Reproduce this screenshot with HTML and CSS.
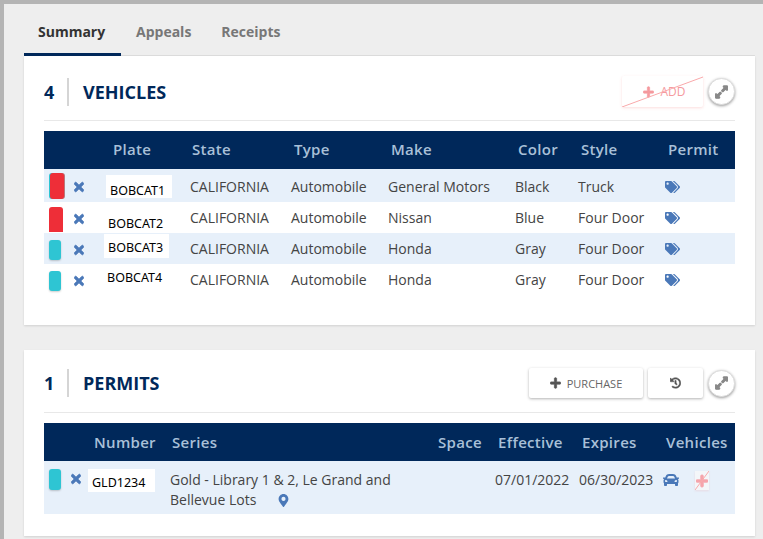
FILE: index.html
```html
<!DOCTYPE html>
<html lang="en">
<head>
    <meta charset="UTF-8">
    <title>Summary</title>
    <link rel="stylesheet" href="styles.css">
</head>
<body>
    <svg class="icon-defs" xmlns="http://www.w3.org/2000/svg">
        <symbol id="i-tags" viewBox="0 0 640 512"><path d="M497.941 225.941L286.059 14.059A48 48 0 0 0 252.118 0H48C21.49 0 0 21.49 0 48v204.118a48 48 0 0 0 14.059 33.941l211.882 211.882c18.744 18.745 49.136 18.746 67.882 0l204.118-204.118c18.745-18.745 18.745-49.137 0-67.882zM112 160c-26.51 0-48-21.49-48-48s21.49-48 48-48 48 21.49 48 48-21.49 48-48 48zm513.941 133.823L421.823 497.941c-18.745 18.745-49.137 18.745-67.882 0l-.36-.36L527.64 323.522c16.999-16.999 26.36-39.6 26.36-63.64s-9.362-46.641-26.36-63.64L331.397 0h48.721a48 48 0 0 1 33.941 14.059l211.882 211.882c18.745 18.745 18.745 49.137 0 67.882z"/></symbol>
        <symbol id="i-times" viewBox="0 0 352 512"><path d="M242.72 256l100.07-100.07c12.28-12.28 12.28-32.19 0-44.48l-22.24-22.24c-12.28-12.28-32.19-12.28-44.48 0L176 189.28 75.93 89.21c-12.28-12.28-32.19-12.28-44.48 0L9.21 111.45c-12.28 12.28-12.28 32.19 0 44.48L109.28 256 9.21 356.07c-12.28 12.28-12.28 32.19 0 44.48l22.24 22.24c12.28 12.28 32.2 12.28 44.48 0L176 322.72l100.07 100.07c12.28 12.28 32.2 12.28 44.48 0l22.24-22.24c12.28-12.28 12.28-32.19 0-44.48L242.72 256z"/></symbol>
        <symbol id="i-car" viewBox="0 0 512 512"><path d="M499.99 176h-59.87l-16.64-41.6C406.38 91.63 365.57 64 319.5 64h-127c-46.06 0-86.88 27.63-103.99 70.4L71.87 176H12.01C4.2 176-1.53 183.34.37 190.91l6 24C7.7 220.25 12.5 224 18.01 224h20.07C24.65 235.73 16 252.78 16 272v48c0 16.12 6.16 30.67 16 41.93V416c0 17.67 14.33 32 32 32h32c17.67 0 32-14.33 32-32v-32h256v32c0 17.67 14.33 32 32 32h32c17.67 0 32-14.33 32-32v-54.07c9.84-11.25 16-25.8 16-41.93v-48c0-19.22-8.65-36.27-22.07-48H494c5.51 0 10.31-3.75 11.64-9.09l6-24c1.89-7.57-3.84-14.91-11.65-14.91zm-352.06-17.83c7.29-18.22 24.94-30.17 44.57-30.17h127c19.63 0 37.28 11.95 44.57 30.17L384 208H128l19.93-49.83zM96 319.8c-19.2 0-32-12.76-32-31.9S76.8 256 96 256s48 28.71 48 47.85-28.8 15.95-48 15.95zm320 0c-19.2 0-48 3.19-48-15.95S396.8 256 416 256s32 12.76 32 31.9-12.8 31.9-32 31.9z"/></symbol>
        <symbol id="i-marker" viewBox="0 0 384 512"><path d="M172.268 501.67C26.97 291.031 0 269.413 0 192 0 85.961 85.961 0 192 0s192 85.961 192 192c0 77.413-26.97 99.031-172.268 309.67-9.535 13.774-29.93 13.773-39.464 0zM192 272c44.183 0 80-35.817 80-80s-35.817-80-80-80-80 35.817-80 80 35.817 80 80 80z"/></symbol>
        <symbol id="i-plus" viewBox="0 0 448 512"><path d="M416 208H272V64c0-17.67-14.33-32-32-32h-32c-17.67 0-32 14.33-32 32v144H32c-17.67 0-32 14.33-32 32v32c0 17.67 14.33 32 32 32h144v144c0 17.67 14.33 32 32 32h32c17.67 0 32-14.33 32-32V304h144c17.67 0 32-14.33 32-32v-32c0-17.67-14.33-32-32-32z"/></symbol>
        <symbol id="i-history" viewBox="0 0 512 512"><path d="M504 255.531c.253 136.64-111.18 248.372-247.82 248.468-59.015.042-113.223-20.53-155.822-54.911-11.077-8.94-11.905-25.541-1.839-35.607l11.267-11.267c8.609-8.609 22.353-9.551 31.891-1.984C173.062 425.135 212.781 440 256 440c101.705 0 184-82.311 184-184 0-101.705-82.311-184-184-184-48.814 0-93.149 18.969-126.068 49.932l50.754 50.754c10.08 10.08 2.941 27.314-11.313 27.314H24c-8.837 0-16-7.163-16-16V38.627c0-14.254 17.234-21.393 27.314-11.314l49.372 49.372C129.209 34.136 189.552 8 256 8c136.81 0 247.747 110.78 248 247.531zm-180.912 78.784l9.823-12.63c8.138-10.463 6.253-25.542-4.21-33.679L288 256.349V152c0-13.255-10.745-24-24-24h-16c-13.255 0-24 10.745-24 24v135.651l65.409 50.874c10.463 8.137 25.541 6.253 33.679-4.21z"/></symbol>
        <symbol id="i-expand" viewBox="0 0 448 512"><path d="M212.686 315.314L120 408l32.922 31.029c15.12 15.12 4.412 40.971-16.97 40.971h-112C10.697 480 0 469.255 0 456V344c0-21.382 25.803-32.09 40.922-16.971L72 360l92.686-92.686c6.248-6.248 16.379-6.248 22.627 0l25.373 25.373c6.249 6.248 6.249 16.378 0 22.627zm22.628-118.628L328 104l-32.922-31.029C279.958 57.851 290.666 32 312.048 32h112C437.303 32 448 42.745 448 56v112c0 21.382-25.803 32.09-40.922 16.971L376 152l-92.686 92.686c-6.248 6.248-16.379 6.248-22.627 0l-25.373-25.373c-6.249-6.248-6.249-16.378 0-22.627z"/></symbol>
    </svg>

    <div class="page">
        <nav class="tabs">
            <a class="tab active">Summary</a>
            <a class="tab">Appeals</a>
            <a class="tab">Receipts</a>
        </nav>

        <section class="card card-vehicles">
            <header class="card-head">
                <span class="count">4</span>
                <h2 class="card-title">VEHICLES</h2>
                <div class="card-actions">
                    <button class="btn btn-add">
                        <svg class="btn-icon"><use href="#i-plus"/></svg>ADD
                        <svg class="strike" viewBox="0 0 81 31" preserveAspectRatio="none"><line x1="0" y1="31" x2="81" y2="1"/></svg>
                    </button>
                    <button class="btn-round"><svg><use href="#i-expand"/></svg></button>
                </div>
            </header>
            <table class="data vehicles">
                <colgroup>
                    <col class="v-tools"><col class="v-plate"><col class="v-state"><col class="v-type">
                    <col class="v-make"><col class="v-color"><col class="v-style"><col class="v-permit">
                </colgroup>
                <thead>
                    <tr><th></th><th class="th-plate">Plate</th><th class="th-state">State</th><th>Type</th><th>Make</th><th>Color</th><th>Style</th><th>Permit</th></tr>
                </thead>
                <tbody>
                    <tr class="shade first">
                        <td class="tools"><div class="tools-in"><span class="swatch red big"></span><svg class="x"><use href="#i-times"/></svg></div></td>
                        <td class="plate-cell"><span class="plate p1">BOBCAT1</span></td>
                        <td>CALIFORNIA</td><td>Automobile</td><td>General Motors</td><td>Black</td><td>Truck</td>
                        <td><svg class="tag"><use href="#i-tags"/></svg></td>
                    </tr>
                    <tr>
                        <td class="tools"><div class="tools-in"><span class="swatch red tall"></span><svg class="x"><use href="#i-times"/></svg></div></td>
                        <td class="plate-cell"><span class="plate p2">BOBCAT2</span></td>
                        <td>CALIFORNIA</td><td>Automobile</td><td>Nissan</td><td>Blue</td><td>Four Door</td>
                        <td><svg class="tag"><use href="#i-tags"/></svg></td>
                    </tr>
                    <tr class="shade">
                        <td class="tools"><div class="tools-in"><span class="swatch teal"></span><svg class="x"><use href="#i-times"/></svg></div></td>
                        <td class="plate-cell"><span class="plate p3">BOBCAT3</span></td>
                        <td>CALIFORNIA</td><td>Automobile</td><td>Honda</td><td>Gray</td><td>Four Door</td>
                        <td><svg class="tag"><use href="#i-tags"/></svg></td>
                    </tr>
                    <tr>
                        <td class="tools"><div class="tools-in"><span class="swatch teal"></span><svg class="x"><use href="#i-times"/></svg></div></td>
                        <td class="plate-cell"><span class="plate p4">BOBCAT4</span></td>
                        <td>CALIFORNIA</td><td>Automobile</td><td>Honda</td><td>Gray</td><td>Four Door</td>
                        <td><svg class="tag"><use href="#i-tags"/></svg></td>
                    </tr>
                </tbody>
            </table>
        </section>

        <section class="card card-permits">
            <header class="card-head">
                <span class="count">1</span>
                <h2 class="card-title">PERMITS</h2>
                <div class="card-actions">
                    <button class="btn btn-purchase"><svg class="btn-icon"><use href="#i-plus"/></svg>PURCHASE</button>
                    <button class="btn btn-history"><svg class="btn-icon"><use href="#i-history"/></svg></button>
                    <button class="btn-round"><svg><use href="#i-expand"/></svg></button>
                </div>
            </header>
            <table class="data permits">
                <colgroup>
                    <col class="p-tools"><col class="p-number"><col class="p-series"><col class="p-space">
                    <col class="p-effective"><col class="p-expires"><col class="p-vehicles">
                </colgroup>
                <thead>
                    <tr><th></th><th class="th-number">Number</th><th class="th-series">Series</th><th class="th-space">Space</th><th>Effective</th><th>Expires</th><th>Vehicles</th></tr>
                </thead>
                <tbody>
                    <tr class="shade">
                        <td class="tools"><div class="tools-in tools-permit"><span class="swatch teal wide"></span><svg class="x"><use href="#i-times"/></svg></div></td>
                        <td class="plate-cell"><span class="plate p5">GLD1234</span></td>
                        <td>Gold - Library 1 &amp; 2, Le Grand and Bellevue Lots <svg class="marker"><use href="#i-marker"/></svg></td>
                        <td></td>
                        <td>07/01/2022</td>
                        <td>06/30/2023</td>
                        <td>
                            <div class="veh-icons">
                                <svg class="car"><use href="#i-car"/></svg>
                                <span class="no-add">
                                    <svg class="no-add-plus"><use href="#i-plus"/></svg>
                                    <svg class="strike" viewBox="0 0 14 19" preserveAspectRatio="none"><line x1="0" y1="19" x2="14" y2="0"/></svg>
                                </span>
                            </div>
                        </td>
                    </tr>
                </tbody>
            </table>
        </section>
    </div>
</body>
</html>
```

FILE: styles.css
```css
* {
    box-sizing: border-box;
}

html, body {
    margin: 0;
    height: 539px;
    overflow: hidden;
}

body {
    font-family: "Open Sans", sans-serif;
    font-size: 14px;
    color: #444;
    background-color: #eee;
    border-top: 4px solid #b4b4b4;
    border-left: 4px solid #b4b4b4;
}

.icon-defs {
    display: none;
}

.page {
    height: 532px;
    padding: 0 8px 0 20px;
}

/* tabs */
.tabs {
    display: flex;
    height: 52px;
    border-bottom: 1px solid #ddd;
}

.tab {
    height: 52px;
    padding: 18px 15px 0 14px;
    font-size: 14px;
    line-height: 20px;
    font-weight: 700;
    color: #777;
}

.tab.active {
    width: 97px;
    color: #333;
    border-bottom: 3px solid #00285a;
}

.tab + .tab {
    padding-left: 15px;
    padding-right: 15px;
}

/* cards */
.card {
    background-color: #fff;
    padding: 0 20px;
    box-shadow: 0 1px 2px rgba(0, 0, 0, 0.12);
}

.card-vehicles {
    height: 269px;
    margin-bottom: 25px;
}

.card-permits {
    height: 186px;
}

.card-head {
    display: flex;
    align-items: center;
    height: 65px;
    padding-top: 7px;
    border-bottom: 1px solid #e8e8e8;
    margin-bottom: 10px;
    color: #00285a;
}

.card-permits .card-head {
    height: 63px;
    padding-top: 4px;
}

.count {
    width: 25px;
    height: 28px;
    line-height: 28px;
    font-size: 18px;
    font-weight: 700;
    border-right: 2px solid #d5d5d5;
}

.card-title {
    margin: 0 0 0 14px;
    font-size: 18px;
    font-weight: 700;
}

.card-actions {
    display: flex;
    align-items: center;
    margin-left: auto;
}

.btn {
    display: flex;
    align-items: center;
    justify-content: center;
    height: 30px;
    padding: 0;
    border: 0;
    border-radius: 2px;
    background-color: #fff;
    font-family: "Open Sans", sans-serif;
    font-size: 11px;
    color: #666;
    box-shadow: 0 1px 3px rgba(0, 0, 0, 0.3);
}

.btn-icon {
    width: 11px;
    height: 12px;
    fill: #555;
    stroke: #555;
    stroke-width: 30;
    margin-right: 6px;
}

.btn-add {
    position: relative;
    width: 81px;
    height: 31px;
    margin-right: 5px;
    padding-left: 4px;
    font-size: 12px;
    color: #f59a9e;
    box-shadow: 0 1px 3px rgba(240, 100, 100, 0.22);
}

.btn-add .btn-icon {
    fill: #f59a9e;
    stroke: #f59a9e;
}

.strike {
    position: absolute;
    left: 0;
    top: 0;
    width: 100%;
    height: 100%;
}

.strike line {
    stroke: #f9a9ab;
    stroke-width: 1;
}

.btn-purchase {
    width: 114px;
    margin-right: 5px;
}

.btn-history {
    width: 55px;
    margin-right: 5px;
}

.btn-history .btn-icon {
    margin-right: 0;
    stroke-width: 20;
}

.btn-round {
    display: flex;
    align-items: center;
    justify-content: center;
    width: 27px;
    height: 27px;
    padding: 0;
    border: 1px solid #ddd;
    border-radius: 50%;
    background-color: #fff;
    box-shadow: 0 1px 3px rgba(0, 0, 0, 0.4);
}

.btn-round svg {
    width: 13px;
    height: 14px;
    fill: #888;
    stroke: #888;
    stroke-width: 40;
}

/* tables */
.data {
    width: 691px;
    table-layout: fixed;
    border-collapse: collapse;
}

.data th {
    height: 38px;
    padding: 0 0 0 3px;
    background-color: #00285a;
    color: #a9c0d8;
    font-size: 15px;
    font-weight: 600;
    letter-spacing: 0.3px;
    text-align: left;
}

.vehicles th {
    padding-bottom: 2px;
}

.data td {
    padding: 6px 0 0;
    height: 31px;
    line-height: 20px;
    vertical-align: top;
}

.shade td {
    background-color: #e7f0fa;
}

.first td {
    height: 33px;
    padding-top: 8px;
}

.data .th-plate {
    padding-left: 9px;
}

.data .th-state {
    padding-left: 2px;
}

.v-tools { width: 60px; }
.v-plate { width: 86px; }
.v-state { width: 101px; }
.v-type { width: 97px; }
.v-make { width: 127px; }
.v-color { width: 63px; }
.v-style { width: 87px; }
.v-permit { width: 70px; }

.data td.tools,
.data td.plate-cell {
    padding: 0;
}

.tools-in {
    display: flex;
    align-items: flex-start;
    height: 31px;
    padding-left: 5px;
}

.swatch {
    width: 12px;
    height: 20px;
    margin-top: 7px;
    border-radius: 3px;
    background-color: #2ec5d3;
    box-shadow: 0 1px 2px rgba(0, 0, 0, 0.2);
}

.swatch.red {
    background-color: #ee2e38;
}

.swatch.big {
    width: 14px;
    height: 26px;
    margin: 4px 0 0 1px;
    box-shadow: -1px 0 0 #2ec5d3, 1px 0 0 #b9787c;
}

.swatch.tall {
    width: 14px;
    height: 25px;
    margin-top: 5px;
    border-radius: 3px 3px 0 0;
    box-shadow: none;
}

.swatch.wide {
    width: 12px;
    height: 21px;
    margin-top: 8px;
}

.x {
    width: 10px;
    height: 14px;
    margin: 10px 0 0 13px;
    fill: #4a78b8;
    stroke: #4a78b8;
    stroke-width: 30;
}

.swatch.big + .x {
    margin: 11px 0 0 10px;
}

.swatch.tall + .x {
    margin-left: 11px;
}

.plate {
    display: block;
    height: 23px;
    line-height: 23px;
    padding-left: 4px;
    font-family: "Noto Sans", sans-serif;
    font-size: 12.5px;
    color: #000;
    background-color: #fff;
}

.p1 { width: 66px; margin: 6px 0 0 2px; padding-top: 5px; line-height: 21px; }
.p2 { width: 66px; margin: 5px 0 0 0; padding-top: 6px; line-height: 21px; }
.p3 { width: 65px; margin: 1px 0 0 0; height: 24px; padding-top: 2px; }
.p4 { width: 66px; margin: 2px 0 0 -1px; }

.tag {
    display: block;
    width: 15px;
    height: 12px;
    margin-top: 4px;
    fill: #4a78b8;
}

/* permits table */
.permits td {
    height: 53px;
    padding-top: 9px;
}

.p-tools { width: 44px; }
.p-number { width: 82px; }
.p-series { width: 265px; }
.p-space { width: 60px; }
.p-effective { width: 84px; }
.p-expires { width: 84px; }
.p-vehicles { width: 72px; }

.data .th-number {
    padding-left: 6px;
}

.data .th-series {
    padding-left: 2px;
}

.data .th-space {
    padding-left: 3px;
}

.tools-permit .x {
    margin: 11px 0 0 10px;
}

.p5 {
    width: 67px;
    margin-top: 8px;
}

.permits .plate {
    padding-top: 3px;
    line-height: 21px;
}

.marker {
    width: 11px;
    height: 13px;
    margin-left: 18px;
    fill: #4a78b8;
    vertical-align: -2px;
}

.veh-icons {
    display: flex;
    align-items: flex-start;
}

.car {
    width: 16px;
    height: 16px;
    margin-top: 2px;
    fill: #4a78b8;
}

.no-add {
    position: relative;
    display: flex;
    align-items: center;
    justify-content: center;
    width: 14px;
    height: 19px;
    margin: 1px 0 0 16px;
    background-color: #f4f6f9;
    box-shadow: 0 1px 2px rgba(240, 100, 100, 0.15);
}

.no-add-plus {
    width: 12px;
    height: 14px;
    fill: #f6a5ac;
    stroke: #f6a5ac;
    stroke-width: 30;
}
```
